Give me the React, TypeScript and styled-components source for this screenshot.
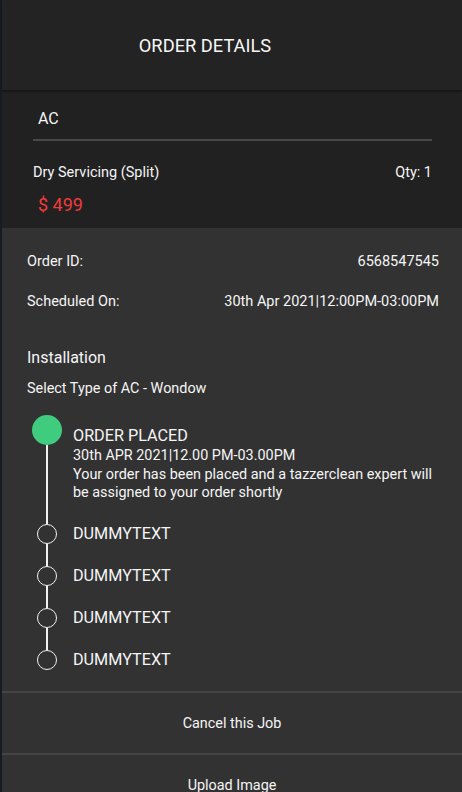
import React from "react";
import styled, { createGlobalStyle } from "styled-components";

const Global = createGlobalStyle`
  html, body { margin: 0; padding: 0; background: #323232; }
  body { font-family: Roboto, "Noto Sans", Arial, sans-serif; -webkit-font-smoothing: antialiased; }
  * { box-sizing: border-box; }
`;

const Screen = styled.div`
  width: 462px;
  min-height: 792px;
  border-left: 2px solid #181b22;
  background: #323232;
  display: flex;
  flex-direction: column;
  color: #f5f5f5;
`;

const Header = styled.header`
  height: 90px;
  background: #232323;
  display: flex;
  align-items: center;
  justify-content: center;
  padding-right: 54px;
  font-size: 18.3px;
  color: #f7f7f7;
  box-shadow: 0 2px 2px rgba(0, 0, 0, 0.35);
  position: relative;
  z-index: 1;
`;

const ProductCard = styled.section`
  background: #212121;
  padding: 19px 30px 12px 31px;
`;

const Category = styled.div`
  font-size: 16px;
  line-height: 20px;
  padding-left: 5px;
`;

const Divider = styled.div`
  height: 2px;
  background: #4a4a4a;
  margin-top: 10px;
`;

const SpreadRow = styled.div<{ $mt: number }>`
  display: flex;
  justify-content: space-between;
  align-items: center;
  font-size: 14.5px;
  line-height: 20px;
  margin-top: ${(p) => p.$mt}px;
`;

const Price = styled.div`
  color: #ef3b3b;
  font-size: 18px;
  line-height: 22px;
  margin-top: 11px;
  padding-left: 5px;
`;

const Details = styled.section`
  padding: 24px 23px 0 25px;
`;

const SectionTitle = styled.div`
  font-size: 16px;
  line-height: 22px;
  margin-top: 35px;
`;

const SubTitle = styled.div`
  font-size: 14.4px;
  line-height: 20px;
  margin-top: 10px;
`;

const Timeline = styled.div`
  margin-top: 16px;
  padding-left: 5px;
  display: flex;
  flex-direction: column;
`;

const Step = styled.div`
  display: flex;
  align-items: stretch;
`;

const Marker = styled.div`
  width: 30px;
  display: flex;
  flex-direction: column;
  align-items: center;
  flex-shrink: 0;
`;

const Dot = styled.div<{ $done?: boolean }>`
  width: ${(p) => (p.$done ? 30 : 20)}px;
  height: ${(p) => (p.$done ? 30 : 20)}px;
  border-radius: 50%;
  flex-shrink: 0;
  background: ${(p) => (p.$done ? "#3fcc7e" : "transparent")};
  border: ${(p) => (p.$done ? "none" : "1.6px solid #f2f2f2")};
`;

const Connector = styled.div`
  width: 2px;
  flex: 1;
  background: #f2f2f2;
`;

const StepBody = styled.div<{ $first?: boolean; $last?: boolean }>`
  margin-left: 11px;
  padding-top: ${(p) => (p.$first ? 11 : 0)}px;
  padding-bottom: ${(p) => (p.$last ? 0 : p.$first ? 22 : 22)}px;
`;

const StepTitle = styled.div`
  font-size: 16.2px;
  line-height: 20px;
`;

const StepLine = styled.div`
  font-size: 14.4px;
  line-height: 18px;
  margin-top: 1px;
`;

const StepText = styled.div`
  font-size: 14.4px;
  line-height: 18px;
  margin-top: 1px;
  max-width: 368px;
`;

const Actions = styled.div`
  margin-top: 21px;
  display: flex;
  flex-direction: column;
`;

const ActionButton = styled.button`
  border: none;
  border-top: 2px solid #444444;
  background: transparent;
  color: #f5f5f5;
  font-family: inherit;
  font-size: 14.4px;
  height: 62px;
  padding: 0;
  display: flex;
  align-items: center;
  justify-content: center;
  cursor: pointer;
`;

const steps = ["DUMMYTEXT", "DUMMYTEXT", "DUMMYTEXT", "DUMMYTEXT"];

export default function App() {
  return (
    <>
      <Global />
      <Screen>
        <Header>ORDER DETAILS</Header>
        <ProductCard>
          <Category>AC</Category>
          <Divider />
          <SpreadRow $mt={22}>
            <span>Dry Servicing (Split)</span>
            <span>Qty: 1</span>
          </SpreadRow>
          <Price>$ 499</Price>
        </ProductCard>
        <Details>
          <SpreadRow $mt={0}>
            <span>Order ID:</span>
            <span>6568547545</span>
          </SpreadRow>
          <SpreadRow $mt={20}>
            <span>Scheduled On:</span>
            <span>30th Apr 2021|12:00PM-03:00PM</span>
          </SpreadRow>
          <SectionTitle>Installation</SectionTitle>
          <SubTitle>Select Type of AC - Wondow</SubTitle>
          <Timeline>
            <Step>
              <Marker>
                <Dot $done />
                <Connector />
              </Marker>
              <StepBody $first>
                <StepTitle>ORDER PLACED</StepTitle>
                <StepLine>30th APR 2021|12.00 PM-03.00PM</StepLine>
                <StepText>
                  Your order has been placed and a tazzerclean expert will be assigned to your order shortly
                </StepText>
              </StepBody>
            </Step>
            {steps.map((s, i) => {
              const last = i === steps.length - 1;
              return (
                <Step key={i}>
                  <Marker>
                    <Dot />
                    {!last && <Connector />}
                  </Marker>
                  <StepBody $last={last}>
                    <StepTitle>{s}</StepTitle>
                  </StepBody>
                </Step>
              );
            })}
          </Timeline>
        </Details>
        <Actions>
          <ActionButton>Cancel this Job</ActionButton>
          <ActionButton>Upload Image</ActionButton>
        </Actions>
      </Screen>
    </>
  );
}
